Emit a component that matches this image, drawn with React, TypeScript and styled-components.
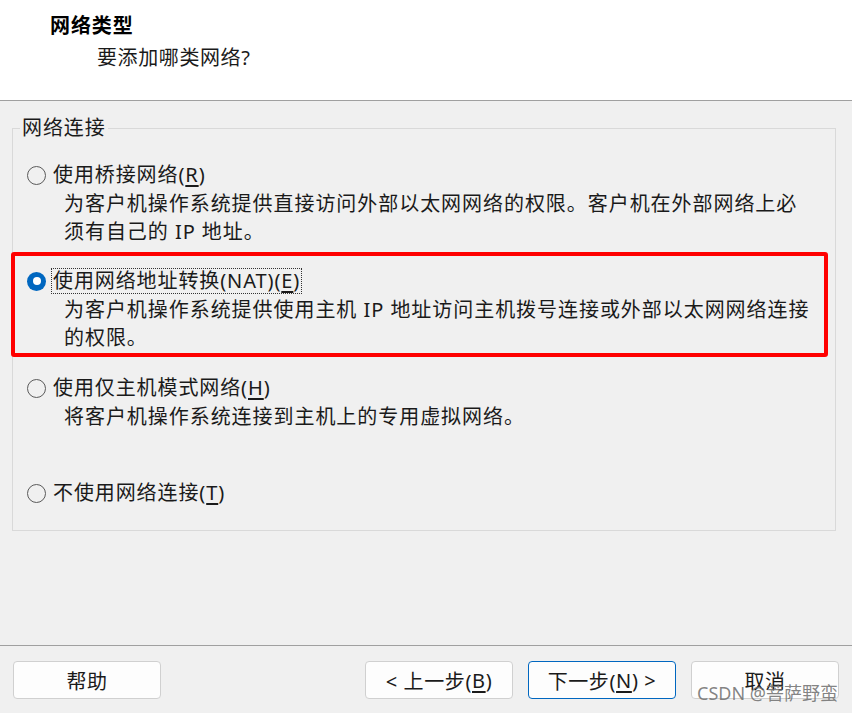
import React from "react";
import styled, { createGlobalStyle } from "styled-components";

const Global = createGlobalStyle`
  html, body { margin: 0; padding: 0; }
  body {
    background: #f0f0f0;
    font-family: "Noto Sans", "Noto Sans CJK SC", sans-serif;
    color: #1a1a1a;
  }
`;

const Window = styled.div`
  position: relative;
  width: 852px;
  height: 713px;
  display: flex;
  flex-direction: column;
  background: #f0f0f0;
  overflow: hidden;
`;

const Header = styled.header`
  background: #ffffff;
  border-bottom: 1px solid #a0a0a0;
  padding: 12px 0 0 50px;
  box-sizing: border-box;
  height: 101px;
`;

const Title = styled.div`
  font-size: 20px;
  font-weight: 700;
  line-height: 28px;
  letter-spacing: 0.9px;
  color: #000;
`;

const Subtitle = styled.div`
  margin: 4px 0 0 47px;
  font-size: 20px;
  line-height: 28px;
  letter-spacing: 0.6px;
  color: #1a1a1a;
`;

const Body = styled.main`
  flex: 1;
`;

const Group = styled.fieldset`
  margin: 15px 16px 0 12px;
  padding: 21px 0 23px 14px;
  border: 1px solid #d9d9d9;
  min-width: 0;
`;

const Legend = styled.legend`
  margin-left: -7px;
  padding: 0 2px;
  font-size: 20px;
  line-height: 24px;
  letter-spacing: 0.9px;
  color: #1a1a1a;
`;

const Option = styled.div<{ $gap: number }>`
  position: relative;
  margin-top: ${(p) => p.$gap}px;
`;

const Row = styled.div`
  display: flex;
  align-items: center;
  height: 28px;
`;

const Radio = styled.span<{ $checked?: boolean }>`
  width: 19px;
  height: 19px;
  box-sizing: border-box;
  border-radius: 50%;
  flex: none;
  display: flex;
  align-items: center;
  justify-content: center;
  border: ${(p) => (p.$checked ? "none" : "1px solid #5a5a5a")};
  background: ${(p) => (p.$checked ? "#0067c0" : "transparent")};
  &::after {
    content: "";
    display: ${(p) => (p.$checked ? "block" : "none")};
    width: 8px;
    height: 8px;
    border-radius: 50%;
    background: #ffffff;
  }
`;

const Label = styled.span<{ $focused?: boolean }>`
  margin-left: 5px;
  padding: 0 1px;
  border: 1px dotted ${(p) => (p.$focused ? "#333" : "transparent")};
  font-size: 20px;
  line-height: 24px;
  letter-spacing: 0.9px;
  color: #1a1a1a;
  white-space: nowrap;
`;

const Key = styled.span`
  text-decoration: underline;
  text-underline-offset: 3px;
`;

const Desc = styled.div`
  margin: 1px 0 0 37px;
  font-size: 20px;
  line-height: 28px;
  letter-spacing: 0.95px;
  color: #1a1a1a;
  white-space: nowrap;
`;

const Highlight = styled.div`
  position: absolute;
  left: -16px;
  top: -15px;
  width: 817px;
  height: 105px;
  box-sizing: border-box;
  border: 4px solid #ff0000;
  border-radius: 3px;
  pointer-events: none;
`;

const Footer = styled.footer`
  border-top: 1px solid #a0a0a0;
  padding: 15px 13px 14px 13px;
  display: flex;
  align-items: center;
  gap: 15px;
`;

const Spacer = styled.div`
  flex: 1;
`;

const Button = styled.button<{ $primary?: boolean }>`
  width: 148px;
  height: 38px;
  box-sizing: border-box;
  border-radius: 4px;
  border: 1px solid ${(p) => (p.$primary ? "#0067c0" : "#d0d0d0")};
  background: #fdfdfd;
  font-family: "Noto Sans", "Noto Sans CJK SC", sans-serif;
  font-size: 20px;
  letter-spacing: 0.6px;
  color: #1a1a1a;
  padding: 0;
  display: flex;
  align-items: center;
  justify-content: center;
`;

const Watermark = styled.div`
  position: absolute;
  right: 14px;
  bottom: 10px;
  font-size: 18px;
  line-height: 20px;
  color: rgba(110, 110, 110, 0.85);
  font-family: "Noto Sans", "Noto Sans CJK SC", sans-serif;
  pointer-events: none;
`;

export default function App() {
  return (
    <>
      <Global />
      <Window>
        <Header>
          <Title>网络类型</Title>
          <Subtitle>要添加哪类网络?</Subtitle>
        </Header>
        <Body>
          <Group>
            <Legend>网络连接</Legend>
            <Option $gap={0}>
              <Row>
                <Radio />
                <Label>
                  使用桥接网络(<Key>R</Key>)
                </Label>
              </Row>
              <Desc>
                为客户机操作系统提供直接访问外部以太网网络的权限。客户机在外部网络上必
                <br />
                须有自己的 IP 地址。
              </Desc>
            </Option>
            <Option $gap={21}>
              <Row>
                <Radio $checked />
                <Label $focused>
                  使用网络地址转换(NAT)(<Key>E</Key>)
                </Label>
              </Row>
              <Desc>
                为客户机操作系统提供使用主机 IP 地址访问主机拨号连接或外部以太网网络连接
                <br />
                的权限。
              </Desc>
              <Highlight />
            </Option>
            <Option $gap={22}>
              <Row>
                <Radio />
                <Label>
                  使用仅主机模式网络(<Key>H</Key>)
                </Label>
              </Row>
              <Desc>将客户机操作系统连接到主机上的专用虚拟网络。</Desc>
            </Option>
            <Option $gap={48}>
              <Row>
                <Radio />
                <Label>
                  不使用网络连接(<Key>T</Key>)
                </Label>
              </Row>
            </Option>
          </Group>
        </Body>
        <Footer>
          <Button>帮助</Button>
          <Spacer />
          <Button>
            &lt; 上一步(<Key>B</Key>)
          </Button>
          <Button $primary>
            下一步(<Key>N</Key>) &gt;
          </Button>
          <Button>取消</Button>
        </Footer>
        <Watermark>CSDN @菩萨野蛮</Watermark>
      </Window>
    </>
  );
}
